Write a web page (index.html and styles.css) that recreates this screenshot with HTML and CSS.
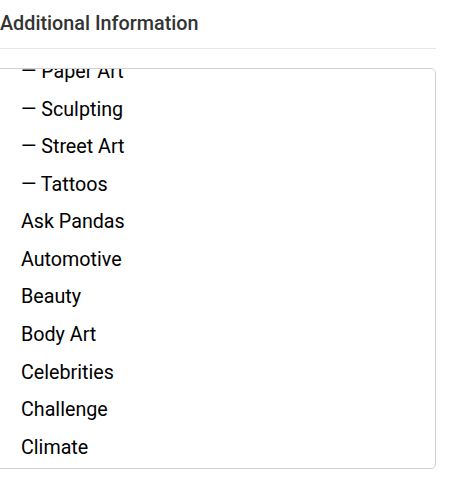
FILE: index.html
```html
<!DOCTYPE html>
<html>
<head>
<meta charset="utf-8">
<link rel="stylesheet" href="styles.css">
</head>
<body>
<section class="panel">
  <h2 class="title">Additional Information</h2>
  <div class="divider"></div>
  <div class="listbox">
    <ul class="options">
      <li>— Paper Art</li>
      <li>— Sculpting</li>
      <li>— Street Art</li>
      <li>— Tattoos</li>
      <li>Ask Pandas</li>
      <li>Automotive</li>
      <li>Beauty</li>
      <li>Body Art</li>
      <li>Celebrities</li>
      <li>Challenge</li>
      <li>Climate</li>
      <li>Comics</li>
    </ul>
  </div>
</section>
</body>
</html>
```
FILE: styles.css
```css
html, body {
  margin: 0;
  padding: 0;
  background: #fff;
}
.panel {
  width: 436px;
  font-family: Roboto, "Liberation Sans", sans-serif;
}
.title {
  margin: 0;
  padding: 10px 0 0 0;
  font-size: 19.8px;
  font-weight: 500;
  line-height: 27px;
  color: #333;
}
.divider {
  margin-top: 11px;
  height: 1px;
  background: #e6e6e6;
}
.listbox {
  margin-top: 19px;
  margin-left: -4px;
  height: 399px;
  border: 1px solid #d0d0d0;
  border-radius: 5px;
  overflow: hidden;
}
.options {
  list-style: none;
  margin: -16px 0 0 0;
  padding: 0 0 0 24px;
}
.options li {
  font-size: 19.7px;
  line-height: 27.56px;
  padding: 5px 0;
  color: #000;
}
```
